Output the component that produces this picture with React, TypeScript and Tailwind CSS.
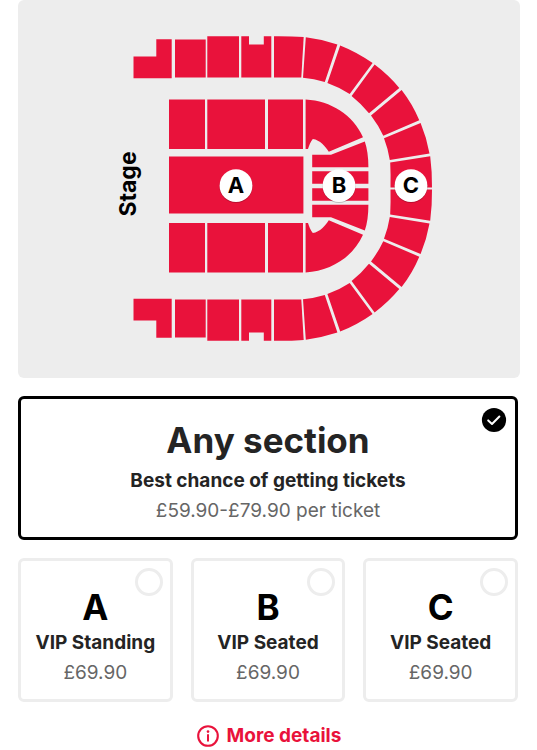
import { useState } from "react";

type Section = {
  id: string;
  title: string;
  name: string;
  price: string;
};

const ANY: Section = {
  id: "any",
  title: "Any section",
  name: "Best chance of getting tickets",
  price: "£59.90-£79.90 per ticket",
};

const SECTIONS: Section[] = [
  { id: "a", title: "A", name: "VIP Standing", price: "£69.90" },
  { id: "b", title: "B", name: "VIP Seated", price: "£69.90" },
  { id: "c", title: "C", name: "VIP Seated", price: "£69.90" },
];

const BADGES = [
  { label: "A", x: 236 },
  { label: "B", x: 339 },
  { label: "C", x: 411 },
];

// Upper half of the outer tier, the lower half is its reflection
const OUTER = [
  "M133.5 56.5H156.3V39.3H171.7V78.3H133.5Z",
  "M175 39.5H205.7V77.6H175Z",
  "M207.3 36.2H239V77.6H207.3Z",
  "M241.3 36.2H249V44.6H263.8V36.2H271.3V77.6H241.3Z",
  "M274 36.2Q290 36 303.7 37.1L301.3 77.6H274Z",
  "M305.8 37.3Q322 39.3 337.4 44.4L324.8 82Q314 78.8 303 77.7Z",
  "M340.2 45.4Q357.5 52.3 372.6 63L349.7 94Q339 87 327.4 82.9Z",
  "M374.6 64.6Q388.5 75 399.3 88L369 113.3Q361.5 104 351.6 96Z",
  "M401.6 90Q412.5 104 419.3 120.3L383.3 135.8Q378.5 125.5 371 115.6Z",
  "M420.6 123Q426.8 138 429.5 153.4L389.8 160Q388 148.5 384 138.2Z",
  "M430.2 156.2Q432.2 172 432 187.4H390.5Q390.8 174 390.2 162.4Z",
];

const INNER = [
  "M169 99.6H205V149H169Z",
  "M207.3 99.6H265V149H207.3Z",
  "M268 99.6H303V149H268Z",
  "M305.6 99.6C331 101 353 115 363 137.3L328.8 151.8C325.5 146.5 320 140 312.8 139C310.5 142 309 145.5 308 149H305.6Z",
  "M312.2 154.8H331L364.8 141.5Q368.4 152 368.4 167.3H312.2Z",
  "M312.2 171.2H368.4V183.8H312.2Z",
];

export default function App() {
  const [selected, setSelected] = useState("any");

  return (
    <main className="pl-[18px] pr-[17px] font-['Inter',sans-serif] bg-white">
      <SeatMap />
      <fieldset aria-label="Section" className="mt-[18px] mr-[2px] flex flex-col gap-[18px]">
        <SectionCard
          section={ANY}
          checked={selected === ANY.id}
          onSelect={setSelected}
          titleClass="pt-5 pb-[5px] text-[#242424]"
        />
        <div className="grid grid-cols-3 gap-[18px]">
          {SECTIONS.map((s) => (
            <SectionCard
              key={s.id}
              section={s}
              checked={selected === s.id}
              onSelect={setSelected}
              titleClass="pt-[25px] text-black"
            />
          ))}
        </div>
      </fieldset>
      <div className="mt-5 flex justify-center">
        <button
          type="button"
          className="flex items-center gap-2 text-[19px] leading-[27px] font-bold text-[#e9123b]"
        >
          <svg viewBox="0 0 22 22" className="size-[22px]" fill="none" aria-hidden="true">
            <circle cx="11" cy="11" r="9.8" stroke="currentColor" strokeWidth="2.1" />
            <path d="M11 9.2V16.6" stroke="currentColor" strokeWidth="2" />
            <circle cx="11" cy="6.6" r="1.3" fill="currentColor" />
          </svg>
          More details
        </button>
      </div>
    </main>
  );
}

function SectionCard({
  section,
  checked,
  onSelect,
  titleClass,
}: {
  section: Section;
  checked: boolean;
  onSelect: (id: string) => void;
  titleClass: string;
}) {
  return (
    <label
      className={`relative flex flex-col items-center rounded-md border-[3px] pb-[11px] text-center cursor-pointer ${
        checked ? "border-black" : "border-[#ededed]"
      }`}
    >
      <input
        type="radio"
        name="section"
        value={section.id}
        checked={checked}
        onChange={() => onSelect(section.id)}
        className="absolute top-[7px] right-[7px] size-7 appearance-none rounded-full border-[3px] border-[#ededed] checked:border-transparent"
      />
      {checked && (
        <svg
          viewBox="0 0 28 28"
          className="absolute top-[7px] right-[7px] size-7 pointer-events-none"
          fill="none"
          aria-hidden="true"
        >
          <circle cx="14" cy="14" r="12.1" fill="#000" />
          <path
            d="M8.2 14.4L12 18L19.4 10.5"
            stroke="#fff"
            strokeWidth="2"
            strokeLinecap="round"
            strokeLinejoin="round"
          />
        </svg>
      )}
      <span className={`text-[35px] leading-[42px] font-bold ${titleClass}`}>{section.title}</span>
      <span className="text-[19px] leading-[30px] font-bold text-[#242424]">{section.name}</span>
      <span className="text-[19px] leading-[30px] text-[#666]">{section.price}</span>
    </label>
  );
}

function SeatMap() {
  return (
    <svg
      viewBox="18 0 502 378"
      className="block w-full rounded-md bg-[#ededed] font-bold"
      role="img"
      aria-label="Seating plan"
    >
      <g fill="#e9123b">
        <Tier paths={OUTER} />
        <g transform="matrix(1 0 0 -1 0 377)">
          <Tier paths={OUTER} />
        </g>
        <Tier paths={INNER} />
        <g transform="matrix(1 0 0 -1 0 372)">
          <Tier paths={INNER} />
        </g>
        <path d="M169 156.6H303.4V213.6H169Z" />
      </g>
      <text transform="translate(136 184) rotate(-90)" textAnchor="middle" fontSize="23">
        Stage
      </text>
      {BADGES.map((b) => (
        <g key={b.label}>
          <circle cx={b.x} cy="186.4" r="16.6" fill="#000" opacity="0.2" />
          <circle cx={b.x} cy="185.7" r="16.4" fill="#fff" />
          <text x={b.x} y="193" textAnchor="middle" fontSize="22">
            {b.label}
          </text>
        </g>
      ))}
    </svg>
  );
}

function Tier({ paths }: { paths: string[] }) {
  return (
    <>
      {paths.map((d) => (
        <path key={d} d={d} />
      ))}
    </>
  );
}
